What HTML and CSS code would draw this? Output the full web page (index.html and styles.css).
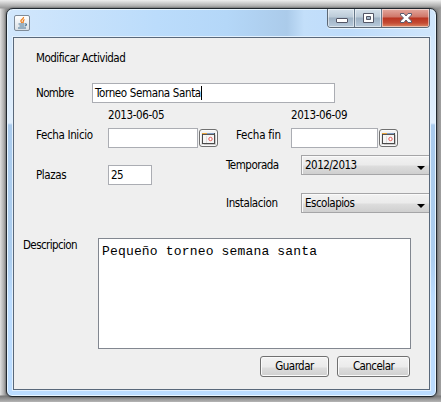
FILE: index.html
```html
<!DOCTYPE html>
<html lang="es">
<head>
<meta charset="utf-8">
<title>Modificar Actividad</title>
<link rel="stylesheet" href="styles.css">
</head>
<body>
<div class="window">
  <header class="titlebar">
    <span class="java">
      <svg width="14" height="14" viewBox="0 0 14 14" fill="none">
        <path d="M8.500 1C9 3 5 3.500 6 5.500L7 7M9.500 3.500C7.500 4.500 8.500 5.500 8 7" stroke="#ef7d1a" stroke-width="1.300"/>
        <path d="M3.500 8h6M4.500 10h5M3 12h8M10 8c2-.7 2 1.500 0 2" stroke="#4c7897" stroke-width="1.200"/>
      </svg>
    </span>
    <div class="controls">
      <span class="ctl"><svg width="26" height="18" viewBox="0 0 26 18"><rect x="8.500" y="9.500" width="11" height="4" rx=".5" fill="#fff" stroke="#535666"/></svg></span>
      <span class="ctl"><svg width="26" height="18" viewBox="0 0 26 18"><path d="M8.500 4.500h10v9h-10zM11.500 7.500v3h4v-3z" fill="#fff" fill-rule="evenodd" stroke="#535666"/></svg></span>
      <span class="ctl close"><svg width="46" height="18" viewBox="0 0 46 18"><path d="M18.500 4.500h3.500l2 2.500 2-2.500h3.500v1.500L26.500 9l3 3v1.500H26L24 11l-2 2.500h-3.500V12l3-3-3-3z" fill="#fff" stroke="#575b70"/></svg></span>
    </div>
  </header>
  <main class="client">
    <div class="heading"><span class="t-head">Modificar Actividad</span></div>
    <div class="row name-row">
      <label class="lbl t-nombre">Nombre</label>
      <div class="field name"><span class="t-torneo">Torneo Semana Santa</span><i class="caret"></i></div>
    </div>
    <div class="row dates"><span class="date">2013-06-05</span><span class="date">2013-06-09</span></div>
    <div class="row pickers">
      <label class="lbl start t-inicio">Fecha Inicio</label>
      <div class="field from"></div>
      <button class="cal"><svg width="15" height="13" viewBox="0 0 15 13"><path d="M3 12.500h11.500V3" stroke="#c9c9c9" fill="none"/><rect x="1.500" y="1.500" width="12" height="10" fill="#f5f5f5" stroke="#4b4b4b"/><path d="M1 1.500h5" stroke="#e8a33c"/><path d="M6 1.500h7" stroke="#7f9cc4"/><path d="M2 2.500h11" stroke="#555"/><path d="M5.500 4v7" stroke="#ddd"/><circle cx="9.500" cy="7" r="1.700" fill="#fff" stroke="#e65b55"/></svg></button>
      <label class="lbl end t-fin">Fecha fin</label>
      <div class="field to"></div>
      <button class="cal"><svg width="15" height="13" viewBox="0 0 15 13"><path d="M3 12.500h11.500V3" stroke="#c9c9c9" fill="none"/><rect x="1.500" y="1.500" width="12" height="10" fill="#f5f5f5" stroke="#4b4b4b"/><path d="M1 1.500h5" stroke="#e8a33c"/><path d="M6 1.500h7" stroke="#7f9cc4"/><path d="M2 2.500h11" stroke="#555"/><path d="M5.500 4v7" stroke="#ddd"/><circle cx="9.500" cy="7" r="1.700" fill="#fff" stroke="#e65b55"/></svg></button>
    </div>
    <div class="columns">
      <div class="row places"><label class="lbl wide t-plazas">Plazas</label><div class="field num"><span class="t-num">25</span></div></div>
      <div class="choices">
        <div class="row"><label class="lbl choice t-temp">Temporada</label><div class="select"><span class="t-year">2012/2013</span><svg class="arrow" width="8" height="4" viewBox="0 0 8 4"><path d="M0 0h8L4 4z"/></svg></div></div>
        <div class="row"><label class="lbl choice t-inst">Instalacion</label><div class="select"><span class="t-esc">Escolapios</span><svg class="arrow" width="8" height="4" viewBox="0 0 8 4"><path d="M0 0h8L4 4z"/></svg></div></div>
      </div>
    </div>
    <div class="row desc">
      <label class="lbl t-desc">Descripcion</label>
      <div class="area">Pequeño torneo semana santa</div>
    </div>
    <div class="actions"><button class="btn save">Guardar</button><button class="btn cancel">Cancelar</button></div>
  </main>
</div>
</body>
</html>
```
FILE: styles.css
```css
* { box-sizing: border-box; }
body {
  margin: 0;
  width: 441px;
  height: 402px;
  overflow: hidden;
  padding: 8px 4px 5px 6px;
  background: linear-gradient(180deg, #eee 0, #999 8px, rgba(153,153,153,0) 9px, rgba(120,120,120,0) 395px, #777 396px, #b5b5b5 402px), linear-gradient(90deg, #e0e0e0 0, #929292 6px, #929292 436px, #8c8c8c 437px, #a0a0a0 441px);
  font: 11.5px/15px "DejaVu Sans Condensed", "DejaVu Sans", sans-serif;
  color: #000;
}
.window {
  width: 431px;
  height: 389px;
  border: 1px solid #20272e;
  border-radius: 7px 7px 6px 6px;
  padding: 0 6px 6px;
  background: linear-gradient(90deg, #d2e7fc 0, #bbdcfb 150px, #b4d7f8 220px, #abcbea 280px, #c3dffa 297px, #bedcfb 340px, #d0e6fc 100%) 0 0 / 100% 30px no-repeat, linear-gradient(180deg, #d2e7fc 30px, #e1effd 114px, #aacbed 116px, #accdee 250px, #bbdcff 290px);
  box-shadow: inset 0 0 0 1px #e8f5ff, 0 0 2px #444;
}
.titlebar { height: 28px; display: flex; justify-content: space-between; }
.java {
  width: 16px;
  height: 16px;
  margin: 6px 0 0 1px;
  border: 1px solid #7f8b98;
  border-radius: 2px;
  background: linear-gradient(#fff, #d9dfe5);
  display: flex;
}
.controls {
  display: flex;
  width: 103px;
  height: 19px;
  border: 1px solid #5c6875;
  border-top: 0;
  border-radius: 0 0 4px 4px;
  overflow: hidden;
  box-shadow: 0 1px 0 #eaf6ff;
}
.ctl {
  width: 27px;
  height: 18px;
  border-right: 1px solid #66788a;
  background: linear-gradient(#d5e1eb 0, #bccbd8 8px, #9eb1c3 9px, #b7cadb 18px);
  box-shadow: inset 0 0 0 1px rgba(255,255,255,.5);
}
.ctl.close {
  width: 47px;
  border: 0;
  background: linear-gradient(#e3a99f 0, #cf7668 8px, #b93421 9px, #c54b33 14px, #dc8a68 18px);
}
.ctl svg { display: block; }
.client {
  width: 417px;
  height: 353px;
  border: 1px solid #59687a;
  background: #efefef;
  box-shadow: 0 0 0 1px #e3f1fe;
}
.row { display: flex; }
.lbl { flex: none; white-space: nowrap; }
.heading { height: 45px; padding: 13px 0 0 22px; }
.name-row { height: 20px; }
.name-row .lbl { width: 56px; margin-left: 22px; padding-top: 3px; }
.field { height: 20px; border: 1px solid #abadb3; background: #fff; padding: 2px 0 0 2px; white-space: nowrap; flex: none; }
.name { width: 243px; display: flex; }
.caret { width: 1px; height: 14px; background: #000; }
.dates { height: 25px; padding: 5px 0 0 94px; gap: 123px; }
.date { width: 60px; letter-spacing: -.4px; white-space: nowrap; }
.start { width: 72px; margin-left: 22px; }
.wide { width: 72px; margin-left: 22px; padding-top: 3px; }
.from { width: 90px; }
.to { width: 87px; }
.end { width: 55px; margin-left: 18px; }
.cal {
  width: 19px;
  height: 18px;
  margin: 1px 0 0 1px;
  padding: 1px;
  border: 1px solid #707070;
  border-radius: 3px;
  background: linear-gradient(#f5f5f5, #dcdcdc);
  box-shadow: inset 0 0 0 1px #fbfbfb;
}
.cal svg { display: block; }
.columns { display: flex; height: 90px; padding-top: 7px; }
.places { width: 212px; padding-top: 10px; }
.num { width: 44px; padding-left: 2px; }
.choices { display: grid; gap: 18px; align-content: start; }
.choice { width: 75px; padding-top: 3px; }
.select {
  width: 128px;
  height: 20px;
  border: 1px solid #a5a5a7;
  border-right: 0;
  background: linear-gradient(#f2f2f2 0, #ebebeb 9px, #dddddd 10px, #cfcfcf 100%);
  box-shadow: inset 1px 1px #fafafa;
  padding: 2px 4px 0 3px;
  display: flex;
  justify-content: space-between;
}
.arrow { margin-top: 8px; }
.desc { height: 111px; }
.desc .lbl { width: 75px; margin-left: 9px; }
.area {
  width: 313px;
  height: 111px;
  border: 1px solid #828790;
  background: #fff;
  padding: 5px 3px;
  font: 13px/15px "Liberation Mono", monospace;
  letter-spacing: .17px;
  white-space: nowrap;
}
.actions { display: flex; gap: 8px; padding: 7px 0 0 246px; }
.btn {
  height: 21px;
  padding: 0 0 1px;
  border: 1px solid #707070;
  border-radius: 3px;
  background: linear-gradient(#f3f3f3 0, #ebebeb 10px, #dddddd 11px, #cfcfcf 100%);
  box-shadow: inset 0 0 0 1px #fafafa;
  font: 11.5px/15px "DejaVu Sans Condensed", "DejaVu Sans", sans-serif;
  letter-spacing: -.55px;
  color: #000;
}
.save { width: 69px; }
.cancel { width: 73px; }
.t-head, .t-temp, .t-num, .t-year, .t-esc { letter-spacing: -.5px; }
.t-nombre, .t-desc { letter-spacing: -.6px; }
.t-inicio { letter-spacing: -.35px; }
.t-fin { letter-spacing: -.2px; }
.t-plazas, .t-inst { letter-spacing: -.4px; }
.t-torneo { letter-spacing: -.36px; }
```
